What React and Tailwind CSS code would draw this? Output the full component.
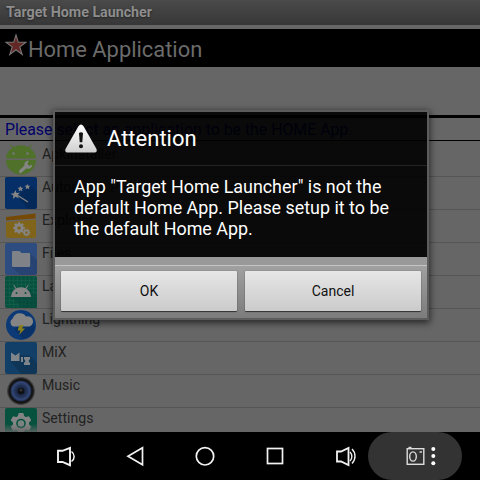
import React from "react";

function ApkIcon() {
  return (
    <svg width="32" height="32" viewBox="0 0 32 32">
      <path d="M1 14.500C1 10.500 3.500 6.500 7.300 4L5.200 1.200l.8-.6L8.400 3.200A16 16 0 0 1 23.600 3.200L26 .6l.8.6L24.700 4C28.500 6.500 31 10.500 31 14.500z" fill="#4f712a" />
      <path d="M1 16h30a15 14.500 0 0 1-30 0z" fill="#4f712a" />
      <circle cx="8.500" cy="9.500" r="1.300" fill="#777" />
      <circle cx="22.500" cy="9.500" r="1.300" fill="#777" />
      <path d="M15.500 27.500l6-5.500" stroke="#858585" strokeWidth="3.200" strokeLinecap="round" />
      <path d="M23.800 16.800a4 4 0 1 0 3.500 3.700l-3 1.500-2-2z" fill="#858585" />
    </svg>
  );
}

function AutoIcon() {
  return (
    <svg width="32" height="32" viewBox="0 0 32 32">
      <rect width="32" height="32" rx="2" fill="#052f66" />
      <path d="M12 18L26 9l6 6v15l-2 2h-7z" fill="#04274f" opacity=".6" />
      <path d="M12 18l11 7" stroke="#858585" strokeWidth="1.400" />
      <path d="M10.500 13l1 3 3.500-.3-2.600 2.500 1.300 3.300-3.200-1.700-2.600 2.200.5-3.500-2.900-1.700 3.400-.6zM15.500 9l.8 1.700 2 .1-1.400 1.400.4 2-1.800-.9-1.700.9.300-2-1.400-1.400 2-.2zM22.500 7l.8 1.700 2 .1-1.400 1.400.4 2-1.800-.9-1.700.9.300-2-1.400-1.400 2-.2z" fill="#858585" />
    </svg>
  );
}

const GEAR_TEETH = [0, 45, 90, 135, 180, 225, 270, 315];

function Gear({ x, y, scale, fill, hole }) {
  return (
    <g transform={`translate(${x} ${y}) scale(${scale})`} fill={fill}>
      {GEAR_TEETH.map((a) => (
        <rect key={a} x="-1.300" y="-6" width="2.600" height="4" transform={`rotate(${a})`} />
      ))}
      <circle r="4.300" />
      <circle r="1.900" fill={hole} />
    </g>
  );
}

function ExplorerIcon() {
  return (
    <svg width="32" height="32" viewBox="0 0 32 32">
      <path d="M1 7L30.500 3.500V8.500L1 10.500z" fill="#744a06" />
      <path d="M1.500 12l29.500-2.500v16.500q0 2-2 2H3q-2 0-2-2V12z" fill="#80641a" />
      <Gear x={14} y={18} scale={0.95} fill="#858585" hole="#80641a" />
      <Gear x={21.500} y={22.500} scale={0.62} fill="#858585" hole="#80641a" />
    </svg>
  );
}

function FilesIcon() {
  return (
    <svg width="32" height="32" viewBox="0 0 32 32">
      <rect width="32" height="32" rx="2" fill="#2d4c80" />
      <path d="M25 10l7 7v13l-2 2H15l-8-8z" fill="#264373" />
      <path d="M8.500 8h6l2 2H24q1.200 0 1.200 1.200v11.500q0 1.300-1.200 1.300H8.200Q7 24 7 22.700V9.300Q7 8 8.500 8z" fill="#7f8287" />
    </svg>
  );
}

function LauncherIcon() {
  return (
    <svg width="32" height="32" viewBox="0 0 32 32">
      <rect width="32" height="32" rx="2" fill="#07513f" />
      <path d="M4.500 0v32M8.500 0v32M12.500 0v32M16.500 0v32M20.500 0v32M24.500 0v32M28.500 0v32M0 4.500h32M0 8.500h32M0 12.500h32M0 16.500h32M0 20.500h32M0 24.500h32M0 28.500h32" stroke="#1a604f" strokeWidth=".6" />
      <path d="M24 13l8 8v11H17l-10-11z" fill="#06483a" opacity=".6" />
      <path d="M6 21c.3-4 2.200-6.800 4.600-8.200L8.500 9.500l.7-.5 2.200 3.300a12 12 0 0 1 9.200 0L22.800 9l.7.5-2.100 3.300C23.800 14.200 25.700 17 26 21z" fill="#858585" />
      <circle cx="11.500" cy="17" r="1" fill="#07513f" />
      <circle cx="20.500" cy="17" r="1" fill="#07513f" />
    </svg>
  );
}

function LightningIcon() {
  return (
    <svg width="32" height="32" viewBox="0 0 32 32">
      <circle cx="16" cy="16" r="15" fill="#0b3a77" />
      <path d="M24 10l6 8c-1 6-6 11-12 12l-9-10z" fill="#092e60" opacity=".7" />
      <path d="M8 17.500a4.500 4.500 0 0 1-.3-8A7.500 7.500 0 0 1 21 7.500a5 5 0 0 1 3.500 10z" fill="#858585" />
      <path d="M14.500 16h4l-1.500 3.500h3L14 26l1.500-4.500h-3z" fill="#8a8019" />
    </svg>
  );
}

function MixIcon() {
  return (
    <svg width="32" height="32" viewBox="0 0 32 32">
      <rect width="32" height="32" rx="2" fill="#123f68" />
      <path d="M14 13l11 1 7 7v9l-2 2H16L6 20z" fill="#103657" />
      <path d="M6 10.500l4.500 3 4-3V19H6zM16 15h2v5h-2zM19 15h6v2l-1.500 2 1.500 2v2h-6v-2l1.500-2L19 17z" fill="#7f858b" />
    </svg>
  );
}

function MusicIcon() {
  return (
    <svg width="32" height="32" viewBox="0 0 32 32">
      <defs>
        <radialGradient id="cone">
          <stop offset="0" stopColor="#11192b" />
          <stop offset=".5" stopColor="#1f2e50" />
          <stop offset=".85" stopColor="#334775" />
          <stop offset="1" stopColor="#15213b" />
        </radialGradient>
      </defs>
      <circle cx="16" cy="16" r="13.300" fill="#151515" stroke="#414141" strokeWidth="1.200" />
      <circle cx="16" cy="16" r="10.500" fill="url(#cone)" />
      <circle cx="16" cy="16" r="3.300" fill="#101012" />
      <circle cx="16" cy="15" r="1.500" fill="#30333a" />
    </svg>
  );
}

function SettingsIcon() {
  return (
    <svg width="32" height="32" viewBox="0 0 32 32">
      <defs>
        <linearGradient id="fade" x1="0" y1="0" x2="0" y2="1">
          <stop offset=".5" stopColor="#666" stopOpacity="0" />
          <stop offset=".8" stopColor="#666" />
        </linearGradient>
      </defs>
      <rect width="32" height="32" rx="2" fill="#07513f" />
      <g transform="translate(16 15.500)" fill="#858585">
        {[0, 60, 120, 180, 240, 300].map((a) => (
          <path key={a} d="M-2.300-10.500h4.600l1.200 4h-7z" transform={`rotate(${a})`} />
        ))}
        <circle r="8" />
        <circle r="4.800" fill="#07513f" />
        <circle r="3.200" fill="#7b8481" />
      </g>
      <rect width="32" height="32" fill="url(#fade)" />
    </svg>
  );
}

const APPS = [
  ["ApkInstaller", ApkIcon],
  ["Automatic P", AutoIcon],
  ["Explorer", ExplorerIcon],
  ["Files", FilesIcon],
  ["Launcher3", LauncherIcon],
  ["Lightning", LightningIcon],
  ["MiX", MixIcon],
  ["Music", MusicIcon],
  ["Settings", SettingsIcon],
];

function Dialog() {
  return (
    <div className="absolute left-[53px] top-[110px] flex h-[210px] w-[376px] flex-col rounded-[1px] border-2 border-[#5c5c5c] shadow-[0_2px_7px_1px_rgba(0,0,0,0.6)]">
      <div className="flex h-[145px] flex-col bg-black/90 text-white">
        <div className="flex h-[54px] shrink-0 items-center border-b border-[#242424] pl-[9px]">
          <svg width="34" height="32" viewBox="0 0 34 32">
            <defs>
              <linearGradient id="warn" x1="0" y1="0" x2="0" y2="1">
                <stop offset="0" stopColor="#fff" />
                <stop offset="1" stopColor="#cfcfcf" />
              </linearGradient>
            </defs>
            <path d="M14.300 3.500Q17-.5 19.700 3.500L32.500 26Q33.500 29.500 30 29.500H4Q.5 29.500 1.500 26z" fill="url(#warn)" />
            <path d="M15 10q2-1.600 4 0l-.7 9.300h-2.600z" fill="#111" />
            <circle cx="17" cy="23.300" r="2" fill="#111" />
          </svg>
          <h2 className="ml-[9px] text-[22px] leading-6">Attention</h2>
        </div>
        <p className="whitespace-nowrap pl-[19px] pt-[10px] text-[17.900px] leading-[21px]">
          App "Target Home Launcher" is not the
          <br />
          default Home App. Please setup it to be
          <br />
          the default Home App.
        </p>
      </div>
      <div className="h-2 bg-[#999]" />
      <div className="flex flex-1 gap-[8px] border-t border-[#c4c4c4] bg-gradient-to-b from-[#a0a0a0] to-[#7c7c7c] px-[6px] pb-[7px] pt-[5px]">
        {["OK", "Cancel"].map((label) => (
          <button
            key={label}
            className="h-10 flex-1 rounded-[1px] bg-gradient-to-b from-[#e6e6e6] to-[#cbcbcb] text-sm text-[#111] shadow-[0_1px_1px_rgba(0,0,0,0.6),0_0_1px_rgba(0,0,0,0.5)]"
          >
            {label}
          </button>
        ))}
      </div>
    </div>
  );
}

function NavIcon({ children }) {
  return (
    <svg width="24" height="24" viewBox="0 0 24 24" fill="none" stroke="#f2f2f2" strokeWidth="1.700">
      {children}
    </svg>
  );
}

function NavBar() {
  return (
    <nav className="flex h-12 items-center bg-black">
      <div className="flex w-[368px] shrink-0 items-center gap-[46px] pl-[53px]">
        <NavIcon>
          <path d="M5 6.800h4.500L17 3.800v17.400L9.500 18H5z" strokeWidth="1.900" />
          <path d="M18.500 7.500c3.500 2.500 3.500 7.500 0 10" strokeWidth="1.500" />
        </NavIcon>
        <NavIcon>
          <path d="M19.500 3.800v17L5 12.300z" />
        </NavIcon>
        <NavIcon>
          <circle cx="12" cy="12.300" r="8.700" />
        </NavIcon>
        <NavIcon>
          <rect x="4.500" y="4.500" width="15" height="15" />
        </NavIcon>
        <NavIcon>
          <path d="M4 7.500h4l7.500-3.500v17L8 17.500H4z" strokeWidth="1.800" />
          <path d="M17 8c2.500 2.500 2.500 6.500 0 9M19 5c4 4 4 10.500 0 14.500" strokeWidth="1.400" />
        </NavIcon>
      </div>
      <div className="flex h-12 w-[94px] items-center rounded-full bg-[#333] pl-[37px]">
        <svg width="32" height="24" viewBox="0 0 32 24" fill="none" stroke="#ddd" strokeWidth="1.400">
          <rect x="2.200" y="4.700" width="16.600" height="15.600" />
          <path d="M3.500 3.500h3" />
          <ellipse cx="8" cy="12.500" rx="3.300" ry="4.600" />
          <path d="M14.500 8h2.500" />
          <g fill="#fff" stroke="none">
            <circle cx="28.300" cy="5" r="2" />
            <circle cx="28.300" cy="12" r="2" />
            <circle cx="28.300" cy="19.300" r="2" />
          </g>
        </svg>
      </div>
    </nav>
  );
}

export default function App() {
  return (
    <div className="relative flex h-[480px] w-[480px] flex-col overflow-hidden bg-[#666] font-[Roboto,sans-serif]">
      <div className="flex h-[25px] shrink-0 items-center bg-gradient-to-b from-[#4a4a4a] to-[#373737] pl-[6px] text-[14.250px] font-bold text-[#8d8d8d] [text-shadow:0_1px_2px_#222]">
        Target Home Launcher
      </div>
      <header className="mt-1 flex h-[38px] shrink-0 bg-black pl-[5px]">
        <svg className="mt-[5px]" width="22" height="22" viewBox="0 0 22 22">
          <path d="M11 1l2.300 7.300H21l-6.200 4.600 2.400 7.600L11 15.800l-6.200 4.700 2.400-7.600L1 8.300h7.700z" fill="#632725" stroke="#777" strokeWidth="1.100" />
        </svg>
        <h1 className="ml-px text-[21.900px] leading-[42px] text-[#6b6b6b]">Home Application</h1>
      </header>
      <div className="h-12 shrink-0" />
      <div className="h-[26px] shrink-0 whitespace-nowrap border-b border-t-[3px] border-black pl-[5px] text-[15.850px] leading-[23px] text-[#00006a]">
        Please select an application to be the HOME App.
      </div>
      <ul className="h-[291px] shrink-0 overflow-hidden pt-[3px]">
        {APPS.map(([name, Icon]) => (
          <li key={name} className="flex h-[33px] border-b border-[#555] pl-[5px]">
            <Icon />
            <span className="ml-[5px] whitespace-nowrap text-[14.100px] leading-[21px] text-[#222]">{name}</span>
          </li>
        ))}
      </ul>
      <NavBar />
      <Dialog />
    </div>
  );
}
